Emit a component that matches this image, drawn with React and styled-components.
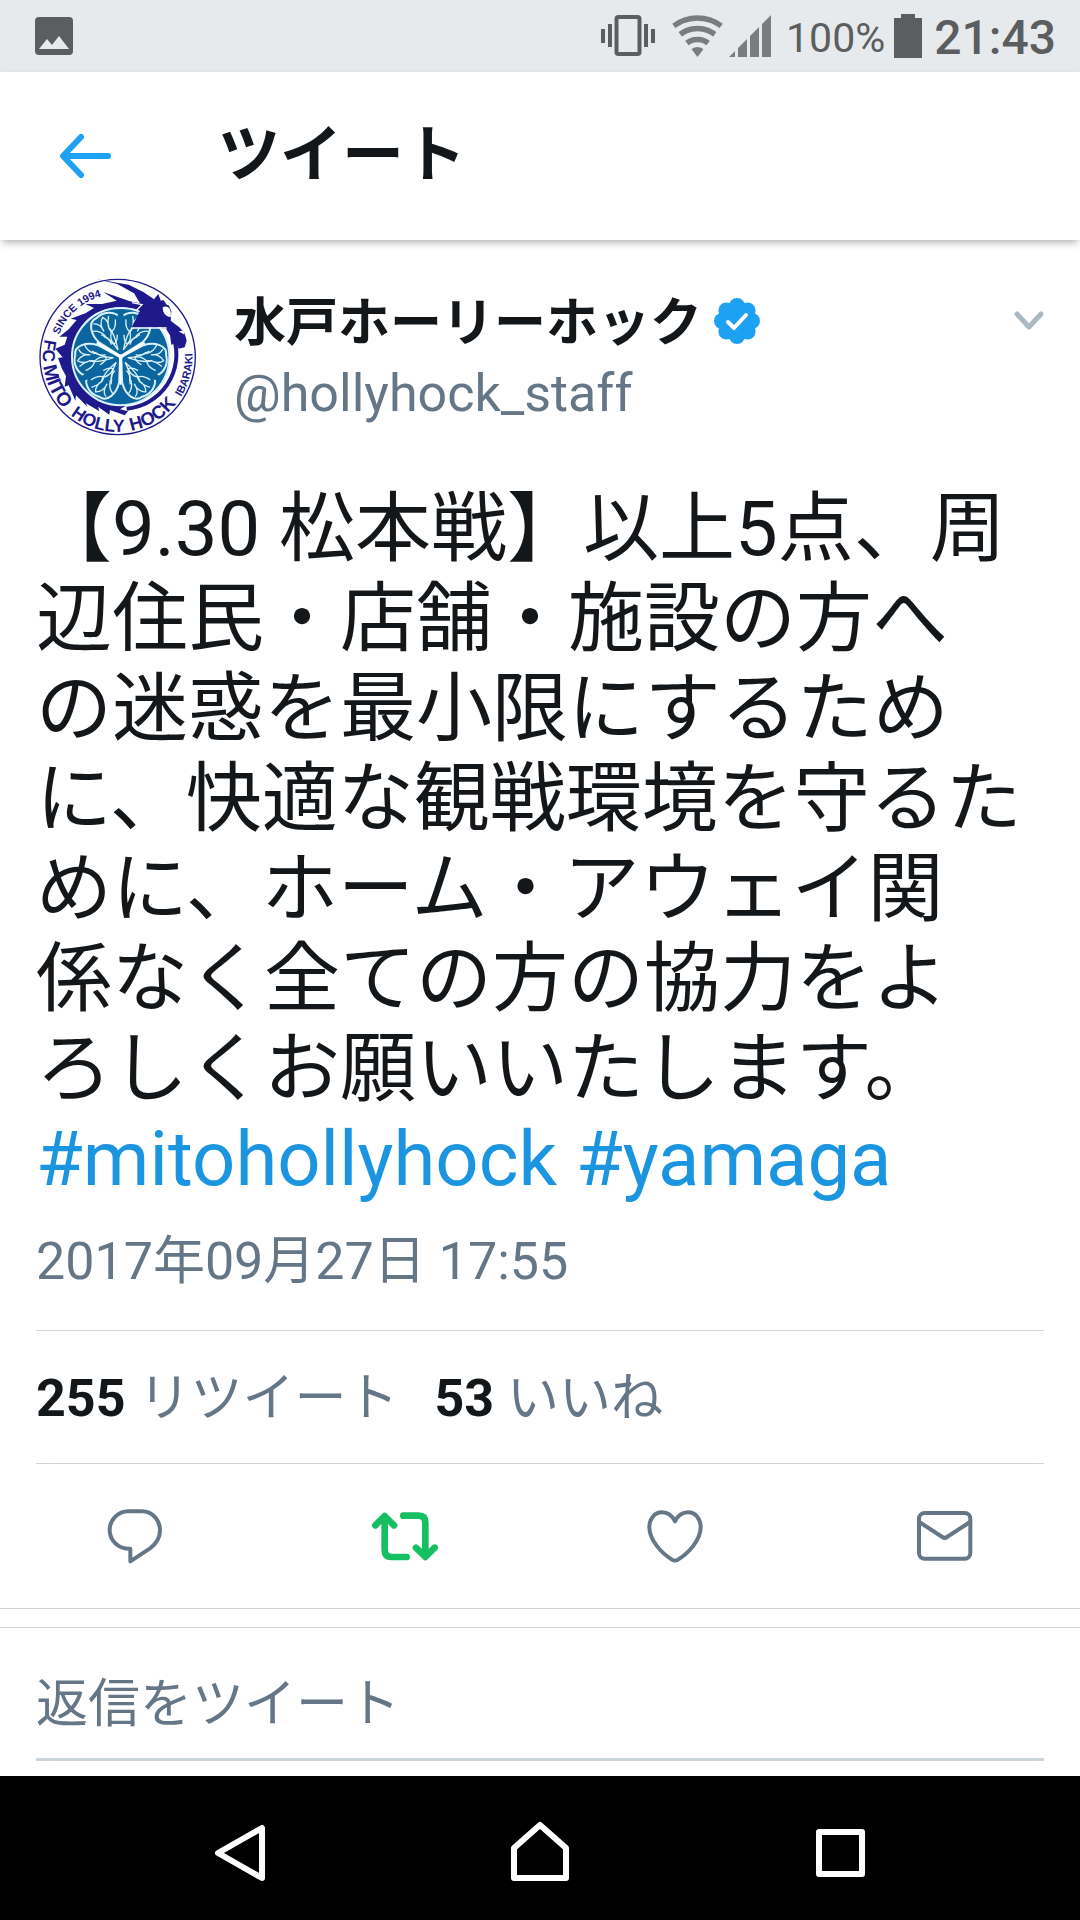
import React from "react";
import styled, { createGlobalStyle } from "styled-components";

const color = {
  ink: "#14171a",
  muted: "#657786",
  faint: "#aab8c2",
  line: "#ccd6dd",
  brand: "#1da1f2",
  link: "#1b95e0",
  green: "#17bf63",
  status: "#5c5d5f",
  signal: "#7b7c7e",
  navy: "#1f1a8c",
  teal: "#0b66a0",
  pale: "#d9f1f8",
};

const GlobalStyle = createGlobalStyle`
  *, *::before, *::after { box-sizing: border-box; }
  body {
    margin: 0;
    background: #fff;
    color: ${color.ink};
    font-family: Roboto, "Noto Sans CJK JP", sans-serif;
  }
  button { padding: 0; border: 0; background: none; font: inherit; cursor: pointer; }
  svg { display: block; flex: none; }
`;

const Screen = styled.div`
  display: flex;
  flex-direction: column;
  min-height: 100vh;
`;

const StatusBar = styled.div`
  display: flex;
  align-items: center;
  justify-content: space-between;
  height: 72px;
  padding: 0 24px 0 35px;
  background: #e6eaed;
  color: ${color.status};
`;

const StatusGroup = styled.div`
  display: flex;
  align-items: center;
`;

const Signals = styled.div`
  display: flex;
  gap: 6px;
  margin: 0 15px 0 17px;
`;

const StatusText = styled.span`
  padding-top: 4px;
  font-size: 41px;
  line-height: 48px;
`;

const BatteryLevel = styled(StatusText)`
  margin-right: 9px;
`;

const Clock = styled(StatusText)`
  margin-left: 12px;
  font-size: 48px;
  font-weight: 500;
`;

const TopBar = styled.header`
  display: flex;
  align-items: center;
  gap: 86px;
  height: 168px;
  padding: 0 36px 0 48px;
  box-shadow: 0 4px 8px -2px rgba(0, 0, 0, 0.34);
`;

const IconButton = styled.button`
  display: flex;
  align-items: center;
  justify-content: center;
  color: ${(p) => p.$tone || color.muted};
`;

const Title = styled.h1`
  margin: 0;
  font-size: 62px;
  font-weight: 700;
  line-height: 72px;
`;

const Main = styled.main`
  flex: 1;
`;

const Tweet = styled.article`
  padding: 36px 36px 0;
`;

const Author = styled.div`
  display: flex;
  align-items: flex-start;
  gap: 36px;
`;

const Names = styled.div`
  flex: 1;
  padding-top: 10px;
`;

const NameRow = styled.div`
  display: flex;
  align-items: flex-start;
  gap: 12px;
  height: 76px;

  svg {
    margin-top: 12px;
  }
`;

const Name = styled.a`
  color: ${color.ink};
  font-size: 52px;
  font-weight: 700;
  line-height: 76px;
  text-decoration: none;
`;

const Handle = styled.div`
  color: ${color.muted};
  font-size: 52px;
  line-height: 64px;
`;

const MenuButton = styled(IconButton)`
  margin-top: 35px;
`;

const Body = styled.p`
  margin: 46px 0 0;
  font-size: 76px;
  line-height: 90px;
  white-space: nowrap;
`;

const Hashtag = styled.a`
  color: ${color.link};
  text-decoration: none;
`;

const Posted = styled.time`
  display: block;
  padding: 20px 0 30px;
  border-bottom: 1px solid ${color.line};
  color: ${color.muted};
  font-size: 52px;
  line-height: 76px;
`;

const Stats = styled.div`
  display: flex;
  gap: 36px;
  padding: 30px 0 26px;
  border-bottom: 1px solid ${color.line};
`;

const Stat = styled.a`
  color: ${color.muted};
  font-size: 52px;
  line-height: 76px;
  text-decoration: none;

  b {
    color: ${color.ink};
  }
`;

const Actions = styled.div`
  display: grid;
  grid-template-columns: repeat(4, 1fr);
  height: 145px;
  border-bottom: 1px solid ${color.line};
`;

const ReplyBox = styled.form`
  margin-top: 18px;
  padding: 32px 36px 15px;
  border-top: 1px solid ${color.line};
`;

const ReplyInput = styled.input`
  display: block;
  width: 100%;
  height: 101px;
  padding: 0 0 10px;
  border: 0;
  border-bottom: 3px solid ${color.line};
  border-radius: 0;
  outline: 0;
  background: none;
  color: ${color.ink};
  font: 400 52px Roboto, "Noto Sans CJK JP", sans-serif;

  &::placeholder {
    color: ${color.muted};
    opacity: 1;
  }
`;

const SystemNav = styled.nav`
  display: grid;
  grid-template-columns: repeat(3, 1fr);
  height: 144px;
  padding: 0 90px;
  background: #000;
`;

const Stroke = ({ size = 72, box = "0 0 72 72", width, children }) => (
  <svg
    width={size}
    height={size}
    viewBox={box}
    fill="none"
    stroke="currentColor"
    strokeWidth={width}
    strokeLinecap="round"
    strokeLinejoin="round"
    aria-hidden="true"
  >
    {children}
  </svg>
);

const PictureIcon = () => (
  <svg width="38" height="38" viewBox="0 0 38 38" aria-hidden="true">
    <rect width="38" height="38" rx="4" fill={color.status} />
    <path d="M4 32 12 22 17 28 24 19 34 32Z" fill="#e6eaed" />
  </svg>
);

const VibrateIcon = () => (
  <svg width="54" height="42" viewBox="0 0 54 42" fill={color.status} aria-hidden="true">
    <rect x="15.500" y="2" width="23" height="37" rx="2" fill="none" stroke={color.status} strokeWidth="4" />
    <path d="M0 14h4v14H0zM7 9h4v23H7zM43 9h4v23h-4zM50 14h4v14h-4z" />
  </svg>
);

const WifiIcon = () => (
  <svg width="51" height="42" viewBox="0 0 51 42" aria-hidden="true">
    <clipPath id="wifi-fan">
      <path d="M25.500 42 -2 6V0H53V6Z" />
    </clipPath>
    <g clipPath="url(#wifi-fan)" fill="none" stroke={color.signal} strokeWidth="5.500">
      <circle cx="25.500" cy="42" r="39" />
      <circle cx="25.500" cy="42" r="28.500" />
      <circle cx="25.500" cy="42" r="17.500" />
      <circle cx="25.500" cy="42" r="5" strokeWidth="10" />
    </g>
  </svg>
);

const SignalIcon = () => (
  <svg width="42" height="42" viewBox="0 0 42 42" fill={color.signal} aria-hidden="true">
    <path d="M0 42 6 36V42ZM9 33 18 24V42H9ZM21 21 30 12V42H21ZM33 9 42 0V42H33Z" />
  </svg>
);

const BatteryIcon = () => (
  <svg width="28" height="44" viewBox="0 0 28 44" fill={color.status} aria-hidden="true">
    <path d="M7 0H21V4H28V44H0V4H7Z" />
  </svg>
);

const VerifiedIcon = () => (
  <svg width="46" height="46" viewBox="0 0 46 46" role="img" aria-label="認証済みアカウント">
    <g fill={color.brand}>
      <circle cx="23" cy="23" r="18" />
      {[0, 45, 90, 135, 180, 225, 270, 315].map((a) => (
        <circle key={a} cx="23" cy="8" r="8" transform={`rotate(${a} 23 23)`} />
      ))}
    </g>
    <path
      d="M14 24 20 30 32 17"
      fill="none"
      stroke="#fff"
      strokeWidth="4"
      strokeLinecap="round"
      strokeLinejoin="round"
    />
  </svg>
);

const Leaf = ({ angle }) => (
  <g transform={`translate(272 260) rotate(${angle})`}>
    <path
      d="M0 -2 -64 -42C-90 -66 -100 -104 -72 -116C-52 -136 -22 -136 -6 -122L0 -128 6 -122C22 -136 52 -136 72 -116C100 -104 90 -66 64 -42Z"
      fill={color.teal}
      stroke={color.pale}
      strokeWidth="6"
    />
    {[1, -1].map((side) => (
      <g key={side} transform={`scale(${side} 1)`} fill="none" stroke={color.pale} strokeWidth="4">
        <path d="M8 -20C14 -50 20 -70 34 -86M8 -20C24 -46 40 -58 58 -66" />
        <path d="M16 -112C14 -94 20 -80 28 -74C38 -84 40 -102 36 -122M36 -84C34 -98 42 -112 54 -118C62 -106 60 -88 50 -76M50 -76C58 -92 70 -100 82 -98M46 -62C58 -74 72 -78 84 -76M10 -66C10 -52 14 -42 20 -38C28 -46 32 -58 28 -74M28 -36C30 -48 38 -56 50 -60" />
      </g>
    ))}
    <path d="M0 -10 -9 -124 0 -140 9 -124Z" fill={color.teal} />
  </g>
);

const ringText = [
  ["FC", 0, 52],
  ["MITO", 82, 58],
  ["HOLLY", 254, 53],
  ["HOCK", 448, 55],
  ["IBARAKI", 634, 33],
];

const ClubEmblem = () => (
  <svg width="162" height="162" viewBox="18 18 486 486" role="img" aria-label="水戸ホーリーホック">
    <defs>
      <path id="arc-lower" d="M45 207A225 225 0 0 0 263 486A225 225 0 0 0 474 184" />
      <path id="arc-since" d="M87 194A188 188 0 0 1 263 73" />
    </defs>
    <circle cx="263" cy="261" r="233" fill="#fff" stroke={color.navy} strokeWidth="4" />
    <path
      fill={color.navy}
      d="M200 28 296 44 340 66 372 88 385 72 396 102 416 106 424 124 422 152 448 172 464 190 470 212 464 232 446 236 438 220 424 224 420 196 408 176 304 174 322 140 318 118C250 102 176 120 146 186C112 262 140 350 200 386C232 404 260 408 290 406L270 418 294 424 284 436 240 420 238 434 204 410 208 424 168 400 172 410 138 376 136 392 116 346 104 350 108 318 96 296 84 264 98 262 76 236 104 224 112 200 88 200 116 178 140 150 122 146 166 130 192 114 166 102 216 102 260 92 220 66 300 94 330 100 312 70 262 42Z"
    />
    <path d="M432 206A163 163 0 0 1 290 416" fill="none" stroke={color.navy} strokeWidth="12" />
    <circle cx="272" cy="260" r="146" fill={color.teal} stroke={color.pale} strokeWidth="6" />
    <Leaf angle={0} />
    <Leaf angle={120} />
    <Leaf angle={240} />
    <path d="M272 260 200 218M272 260 344 218M272 260V344" stroke="#fff" strokeWidth="6" />
    <circle cx="272" cy="260" r="7" fill="#fff" />
    <path d="M304 174 336 110 400 90 422 120 420 170Z" fill={color.navy} />
    <path d="M398 112C414 104 426 118 422 142 408 140 398 130 398 112ZM446 184 460 182 464 194Z" fill="#fff" />
    <path d="M304 174H410M306 98 336 104 318 122" fill="none" stroke="#fff" strokeWidth="4" />
    <g fill={color.navy} fontFamily="Liberation Sans, Arial, sans-serif" fontWeight="700">
      {ringText.map(([word, offset, size]) => (
        <text key={word} fontSize={size}>
          <textPath href="#arc-lower" startOffset={offset}>
            {word}
          </textPath>
        </text>
      ))}
      <text fontSize="32">
        <textPath href="#arc-since">SINCE 1994</textPath>
      </text>
    </g>
  </svg>
);

export default function App() {
  return (
    <>
      <GlobalStyle />
      <Screen lang="ja">
        <StatusBar>
          <PictureIcon />
          <StatusGroup>
            <VibrateIcon />
            <Signals>
              <WifiIcon />
              <SignalIcon />
            </Signals>
            <BatteryLevel>100%</BatteryLevel>
            <BatteryIcon />
            <Clock>21:43</Clock>
          </StatusGroup>
        </StatusBar>

        <TopBar>
          <IconButton $tone={color.brand} aria-label="戻る">
            <Stroke size={84} box="0 0 84 84" width="6">
              <path d="M60 42H16M33 23 15 42 33 61" />
            </Stroke>
          </IconButton>
          <Title>ツイート</Title>
        </TopBar>

        <Main>
          <Tweet>
            <Author>
              <ClubEmblem />
              <Names>
                <NameRow>
                  <Name href="#profile">水戸ホーリーホック</Name>
                  <VerifiedIcon />
                </NameRow>
                <Handle>@hollyhock_staff</Handle>
              </Names>
              <MenuButton $tone={color.faint} aria-label="メニュー">
                <svg width="30" height="20" viewBox="0 0 30 20" fill="none" stroke="currentColor" strokeWidth="5" strokeLinecap="round" strokeLinejoin="round" aria-hidden="true">
                  <path d="M3 3 15 16 27 3" />
                </svg>
              </MenuButton>
            </Author>

            <Body>
              【9.30 松本戦】以上5点、周
              <br />
              辺住民・店舗・施設の方へ
              <br />
              の迷惑を最小限にするため
              <br />
              に、快適な観戦環境を守るた
              <br />
              めに、ホーム・アウェイ関
              <br />
              係なく全ての方の協力をよ
              <br />
              ろしくお願いいたします。
              <br />
              <Hashtag href="#mitohollyhock">#mitohollyhock</Hashtag>{" "}
              <Hashtag href="#yamaga">#yamaga</Hashtag>
            </Body>

            <Posted dateTime="2017-09-27T17:55">2017年09月27日 17:55</Posted>

            <Stats>
              <Stat href="#retweets">
                <b>255</b> リツイート
              </Stat>
              <Stat href="#likes">
                <b>53</b> いいね
              </Stat>
            </Stats>
          </Tweet>

          <Actions>
            <IconButton aria-label="返信">
              <Stroke box="117 180 216 216" width="12">
                <path d="M205 214H246C276 214 300 240 300 271C300 295 287 313 270 325L211 364V326H205C174 326 149 301 149 270C149 239 174 214 205 214Z" />
              </Stroke>
            </IconButton>
            <IconButton $tone={color.green} aria-label="リツイート">
              <Stroke box="927 180 216 216" width="20">
                <path d="M974 230V330Q974 351 995 351H1040M946 256 974 228 1002 256M1030 227H1076Q1096 227 1096 248V348M1068 323 1096 351 1124 323" />
              </Stroke>
            </IconButton>
            <IconButton aria-label="いいね">
              <Stroke box="237 180 216 216" width="12">
                <path d="M345 244C336 226 322 217 306 217C283 217 268 237 268 262C268 300 305 340 336 359Q345 364 354 359C385 340 422 300 422 262C422 237 407 217 384 217C368 217 354 226 345 244Z" />
              </Stroke>
            </IconButton>
            <IconButton aria-label="メッセージ">
              <Stroke box="1047 180 216 216" width="12">
                <rect x="1077" y="219" width="154" height="137" rx="17" />
                <path d="M1078 246 1147 291Q1154 296 1161 291L1230 246" />
              </Stroke>
            </IconButton>
          </Actions>

          <ReplyBox>
            <ReplyInput type="text" aria-label="返信をツイート" placeholder="返信をツイート" />
          </ReplyBox>
        </Main>

        <SystemNav>
          <IconButton $tone="#fff" aria-label="戻る">
            <Stroke width="6">
              <path d="M14 41 58 16V66Z" />
            </Stroke>
          </IconButton>
          <IconButton $tone="#fff" aria-label="ホーム">
            <Stroke width="6">
              <path d="M10 66V36L36 13 62 36V66Z" />
            </Stroke>
          </IconButton>
          <IconButton $tone="#fff" aria-label="アプリ履歴">
            <Stroke width="6">
              <rect x="15" y="20" width="43" height="42" />
            </Stroke>
          </IconButton>
        </SystemNav>
      </Screen>
    </>
  );
}
